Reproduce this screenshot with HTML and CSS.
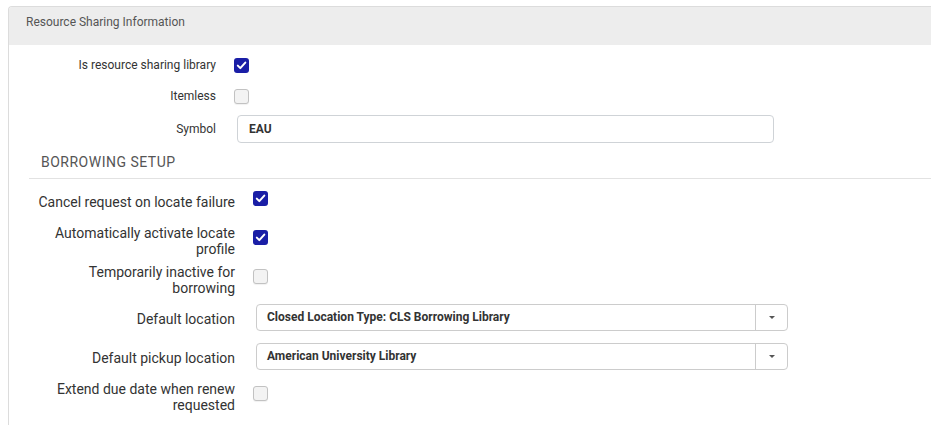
FILE: index.html
```html
<!DOCTYPE html>
<html>
<head>
<meta charset="utf-8">
<link rel="stylesheet" href="styles.css">
</head>
<body>
<div class="panel">
  <div class="panel-heading">Resource Sharing Information</div>
  <div class="panel-body">
    <div class="basic">
      <div class="row1 row1-first">
        <label class="lbl1">Is resource sharing library</label>
        <span class="cb cb-on"><svg viewBox="0 0 15 15" width="15" height="15"><path d="M3.8 7.6 L6.3 10.1 L11.3 4.6" fill="none" stroke="#fff" stroke-width="2" stroke-linecap="round" stroke-linejoin="round"/></svg></span>
      </div>
      <div class="row1 row1-second">
        <label class="lbl1">Itemless</label>
        <span class="cb cb-off"></span>
      </div>
      <div class="row1 row1-third">
        <label class="lbl1">Symbol</label>
        <div class="text-input">EAU</div>
      </div>
    </div>

    <div class="section">
      <h3 class="section-title">Borrowing Setup</h3>
      <div class="rows2">
        <div class="row2 row-a">
          <label class="lbl2 lbl-single">Cancel request on locate failure</label>
          <span class="cb cb-on cb-top"><svg viewBox="0 0 15 15" width="15" height="15"><path d="M3.8 7.6 L6.3 10.1 L11.3 4.6" fill="none" stroke="#fff" stroke-width="2" stroke-linecap="round" stroke-linejoin="round"/></svg></span>
        </div>
        <div class="row2 row-b">
          <label class="lbl2">Automatically activate locate profile</label>
          <span class="cb cb-on"><svg viewBox="0 0 15 15" width="15" height="15"><path d="M3.8 7.6 L6.3 10.1 L11.3 4.6" fill="none" stroke="#fff" stroke-width="2" stroke-linecap="round" stroke-linejoin="round"/></svg></span>
        </div>
        <div class="row2 row-c">
          <label class="lbl2">Temporarily inactive for borrowing</label>
          <span class="cb cb-off"></span>
        </div>
        <div class="row2 row-d">
          <label class="lbl2 lbl-select">Default location</label>
          <div class="select">
            <span class="select-value">Closed Location Type: CLS Borrowing Library</span>
            <span class="select-btn"><span class="caret"></span></span>
          </div>
        </div>
        <div class="row2 row-e">
          <label class="lbl2 lbl-select">Default pickup location</label>
          <div class="select">
            <span class="select-value">American University Library</span>
            <span class="select-btn"><span class="caret"></span></span>
          </div>
        </div>
        <div class="row2 row-f">
          <label class="lbl2">Extend due date when renew requested</label>
          <span class="cb cb-off"></span>
        </div>
      </div>
    </div>
  </div>
</div>
</body>
</html>
```

FILE: styles.css
```css
html, body {
  margin: 0;
  padding: 0;
  background: #fff;
  overflow: hidden;
}

body {
  font-family: Roboto, "Liberation Sans", sans-serif;
  color: #333;
  height: 425px;
}

.panel {
  margin: 6px 0 0 8px;
  border-top: 1px solid #dcdcdc;
  border-left: 1px solid #dcdcdc;
  border-top-left-radius: 4px;
  height: 419px;
  box-sizing: border-box;
}

.panel-heading {
  height: 38px;
  box-sizing: border-box;
  padding: 7px 17px 0;
  background: #ededed;
  font-size: 12px;
  line-height: 16px;
  color: #555;
  border-top-left-radius: 3px;
}

.panel-body {
  padding-top: 12px;
}

/* top block */
.row1 {
  display: grid;
  grid-template-columns: 207px 1fr;
  column-gap: 18px;
  align-items: center;
}

.row1-second { margin-top: 15px; }
.row1-third { margin-top: 11px; }

.lbl1 {
  text-align: right;
  font-size: 12px;
  line-height: 16px;
  color: #333;
}

.text-input {
  margin-left: 3px;
  width: 537px;
  height: 28px;
  box-sizing: border-box;
  border: 1px solid #cfd3d7;
  border-radius: 4px;
  padding-left: 11px;
  font-size: 12px;
  font-weight: 700;
  line-height: 26px;
  color: #333;
}

/* checkboxes */
.cb {
  display: block;
  width: 15px;
  height: 15px;
  box-sizing: border-box;
  border-radius: 3px;
}

.cb svg { display: block; }

.cb-on {
  background: #1a1ea6;
}

.cb-off {
  background: #f3f3f3;
  border: 1px solid #c2c2c2;
  box-shadow: 0 1px 1px rgba(0, 0, 0, 0.06);
}

/* section */
.section {
  margin: 9px 0 0 20px;
}

.section-title {
  margin: 0;
  padding: 0 0 6px 12px;
  border-bottom: 1px solid #e2e2e2;
  font-size: 14px;
  line-height: 20px;
  font-weight: 400;
  text-transform: uppercase;
  letter-spacing: 0.5px;
  color: #555;
}

.rows2 {
  display: flex;
  flex-direction: column;
}

.row2 {
  display: grid;
  grid-template-columns: 206px 1fr;
  column-gap: 18px;
  align-items: start;
}

.row2 .cb { margin-top: 5px; }
.row2 .cb.cb-top { margin-top: 0; }

.row-a { margin-top: 12px; }
.row-b { margin-top: 15px; }
.row-c { margin-top: 7px; }
.row-d { margin-top: 8px; }
.row-e { margin-top: 12px; }
.row-f { margin-top: 11px; }

.lbl2 {
  text-align: right;
  font-size: 14px;
  line-height: 16px;
  color: #333;
}

.lbl-single { padding-top: 3px; }
.lbl-select { padding-top: 7px; }

.select {
  margin-left: 3px;
  width: 532px;
  height: 27px;
  box-sizing: border-box;
  border: 1px solid #cccccc;
  border-radius: 4px;
  display: flex;
}

.select-value {
  flex: 1;
  padding-left: 10px;
  font-size: 12px;
  font-weight: 700;
  line-height: 25px;
  color: #333;
}

.select-btn {
  width: 31px;
  border-left: 1px solid #cccccc;
  display: flex;
  align-items: center;
  justify-content: center;
}

.caret {
  width: 0;
  height: 0;
  border-left: 3px solid transparent;
  border-right: 3px solid transparent;
  border-top: 3px solid #555;
}
```
